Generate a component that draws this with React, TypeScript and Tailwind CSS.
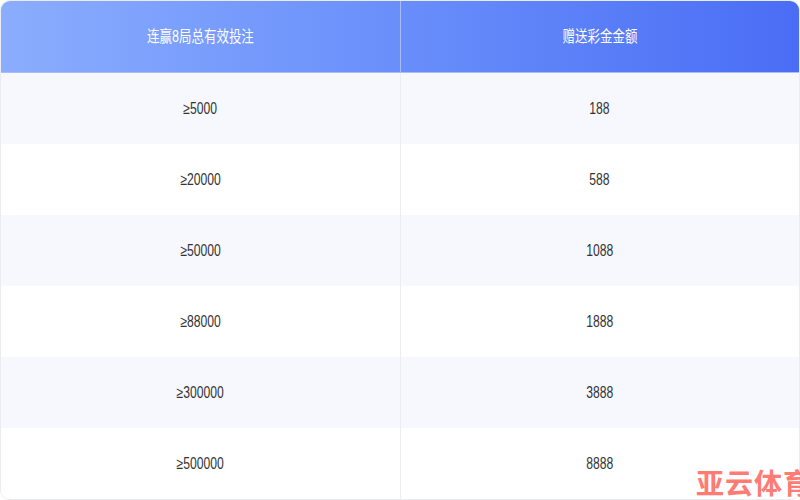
const rows = [
  ["≥5000", "188"],
  ["≥20000", "588"],
  ["≥50000", "1088"],
  ["≥88000", "1888"],
  ["≥300000", "3888"],
  ["≥500000", "8888"],
];

export default function App() {
  return (
    <div
      className="relative w-[800px] h-[500px] bg-white overflow-hidden"
      style={{ fontFamily: '"Liberation Sans", "Noto Sans CJK SC", sans-serif' }}
    >
      <div className="flex flex-col h-[500px] rounded-[10px] border border-[#ebecf2] overflow-hidden">
        {/* header */}
        <div className="flex h-[72px] shrink-0 bg-linear-to-r from-[#8badfe] to-[#4a6df5] border-b border-[#a9bcfb]">
          <div className="flex-1 flex items-center justify-center border-r border-[#a6bbfc]">
            <span className="inline-block text-[16px] text-white scale-x-[0.78]">连赢8局总有效投注</span>
          </div>
          <div className="flex-1 flex items-center justify-center">
            <span className="inline-block text-[16px] text-white scale-x-[0.78]">赠送彩金金额</span>
          </div>
        </div>

        {/* body */}
        <div className="flex flex-col flex-1">
          {rows.map(([bet, bonus], i) => (
            <div key={i} className={i % 2 === 0 ? "flex flex-1 bg-[#f7f8fd]" : "flex flex-1 bg-white"}>
              <div className="flex-1 flex items-center justify-center border-r border-[#ececf1]">
                <span className="inline-block text-[16px] text-[#333] scale-x-[0.76]">{bet}</span>
              </div>
              <div className="flex-1 flex items-center justify-center">
                <span className="inline-block text-[16px] text-[#333] scale-x-[0.76]">{bonus}</span>
              </div>
            </div>
          ))}
        </div>
      </div>

      {/* watermark */}
      <div className="absolute left-[696px] top-[471px] whitespace-nowrap text-[28px] font-bold leading-none text-[#ff7b74] tracking-[1px]">
        亚云体育
      </div>
    </div>
  );
}
